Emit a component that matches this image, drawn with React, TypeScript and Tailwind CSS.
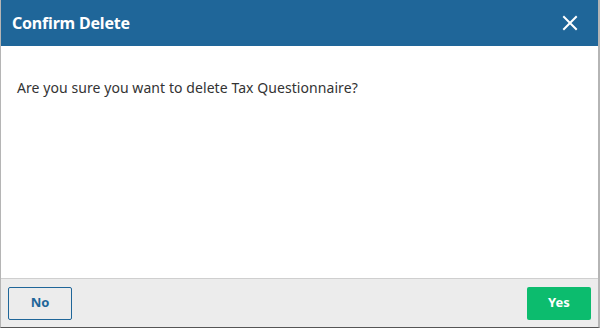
import React from "react";

export default function App() {
  return (
    <div
      className="w-[600px] h-[328px] flex flex-col bg-white border-l border-r-2 border-b border-l-[#b5b5b5] border-r-[#b5b5b5] border-b-[#555]"
      style={{ fontFamily: '"Noto Sans", "Open Sans", sans-serif' }}
    >
      <div className="h-[46px] bg-[#1f6699] flex items-center justify-between pl-[11px] pr-[20px] shrink-0">
        <span className="text-white font-bold text-[16px] tracking-[-0.2px]">Confirm Delete</span>
        <svg width="16" height="16" viewBox="0 0 16 16" className="text-white">
          <path d="M2 2 L14 14 M14 2 L2 14" stroke="currentColor" strokeWidth="2" strokeLinecap="square" />
        </svg>
      </div>
      <div className="flex-1 px-[16px] pt-[31px]">
        <p className="text-[14px] text-[#333] tracking-[0.07px]">Are you sure you want to delete Tax Questionnaire?</p>
      </div>
      <div className="h-[49px] bg-[#ececec] border-t border-[#cfcfcf] flex items-center justify-between pl-[7px] pr-[7px] shrink-0">
        <button className="w-[64px] h-[33px] border border-[#1f6699] rounded-[2px] text-[#1f6699] text-[13px] font-bold flex items-center justify-center">
          No
        </button>
        <button className="w-[64px] h-[33px] bg-[#0cbc6e] rounded-[2px] text-white text-[13px] font-bold flex items-center justify-center">
          Yes
        </button>
      </div>
    </div>
  );
}
